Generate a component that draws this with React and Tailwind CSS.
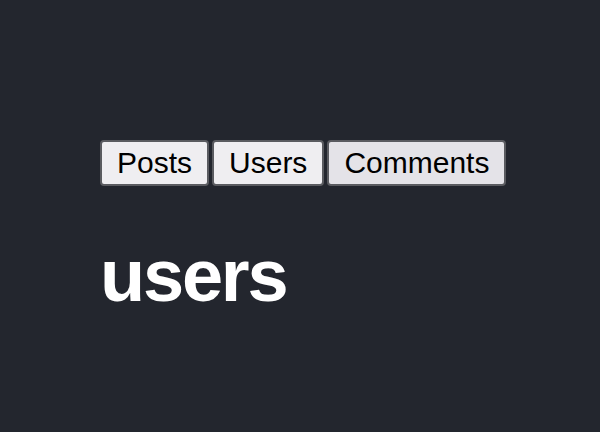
export default function App() {
  const tabs = ['Posts', 'Users', 'Comments']
  return (
    <div className="min-h-screen bg-[#23262e] px-[100px] pt-[140px] font-['Liberation_Sans',Arial,sans-serif]">
      <div className="flex gap-[3px]">
        {tabs.map((t) => (
          <button
            key={t}
            className={
              'h-[46px] rounded-[4px] border-2 border-[#5a5b60] px-[15px] text-[30px] leading-none text-black ' +
              (t === 'Comments' ? 'bg-[#e4e3e8]' : 'bg-[#efeef1]')
            }
          >
            {t}
          </button>
        ))}
      </div>
      <h1 className="mt-[53px] text-[74px] font-bold leading-none tracking-[-0.03em] text-white">
        users
      </h1>
    </div>
  )
}
